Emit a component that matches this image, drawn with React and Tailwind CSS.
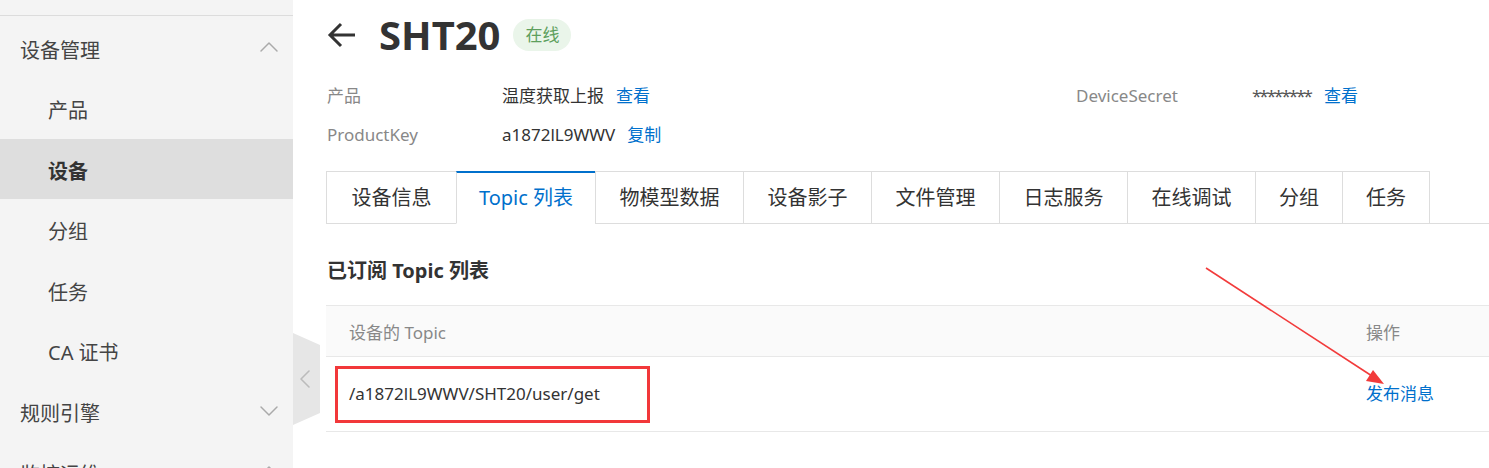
import { ChevronUp, ChevronDown, ChevronLeft } from "lucide-react";

const font = "font-['Noto_Sans','Noto_Sans_CJK_SC',sans-serif]";

const subItems = ["产品", "设备", "分组", "任务", "CA 证书"];

const tabs = [
  { label: "设备信息", w: "w-[130px]" },
  { label: "Topic 列表", w: "w-[139px]", active: true },
  { label: "物模型数据", w: "w-[148px]" },
  { label: "设备影子", w: "w-[128px]" },
  { label: "文件管理", w: "w-[128px]" },
  { label: "日志服务", w: "w-[128px]" },
  { label: "在线调试", w: "w-[128px]" },
  { label: "分组", w: "w-[87px]" },
  { label: "任务", w: "w-[88px]" },
];

function GroupRow({ label, open, h = "h-[60.5px]" }) {
  const Icon = open ? ChevronUp : ChevronDown;
  return (
    <div className={`flex ${h} items-center justify-between pt-[7px] pl-5 pr-2 text-[20px] text-[#444]`}>
      <span>{label}</span>
      <Icon className="-mt-[7px] h-8 w-8 text-[#aaa]" strokeWidth={1.1} />
    </div>
  );
}

function Sidebar() {
  return (
    <aside className="w-[293px] shrink-0 h-[468px] overflow-hidden bg-[#f4f4f4]">
      <div className="h-4 border-b border-[#dcdcdc]" />
      <GroupRow label="设备管理" open h="h-[62px]" />
      {subItems.map((item) => (
        <div
          key={item}
          className={
            "flex h-[60.5px] items-center pt-[6px] pl-12 text-[20px] " +
            (item === "设备" ? "bg-[#dedede] font-bold text-[#333]" : "text-[#444]")
          }
        >
          {item}
        </div>
      ))}
      <GroupRow label="规则引擎" />
      <GroupRow label="监控运维" open />
    </aside>
  );
}

export default function App() {
  return (
    <div className={`relative flex h-[468px] w-[1489px] overflow-hidden bg-white ${font}`}>
      <Sidebar />

      {/* collapse handle */}
      <div className="absolute left-[293px] top-[333px] flex h-[92px] w-[27px] items-center justify-center bg-[#e6e6e6] [clip-path:polygon(0_0,100%_13%,100%_87%,0_100%)]">
        <ChevronLeft className="-ml-[3px] h-8 w-8 shrink-0 text-[#bbb]" strokeWidth={1.2} />
      </div>

      <main className="relative flex-1 pl-[34px]">
        <div className="flex h-[70px] items-center">
          <svg className="h-[26px] w-[30px] text-[#333]" viewBox="0 0 30 26" fill="none" stroke="currentColor" strokeWidth="3">
            <path d="M28 13H3M14 2L3 13l11 11" />
          </svg>
          <h1 className="ml-[22px] text-[40px] font-bold leading-none text-[#333]">SHT20</h1>
          <span className="ml-[13px] rounded-full bg-[#eaf5ea] px-[12px] py-[3px] text-[17px] text-[#5d9f5d]">在线</span>
        </div>

        <div className="mt-[6px] mb-[17px] grid grid-cols-[175px_574px_176px_auto] text-[17px]">
          <div className="flex h-[39px] items-center text-[#888]">产品</div>
          <div className="flex h-[39px] items-center text-[#333]">
            温度获取上报<a className="ml-3 text-[#0070cc]">查看</a>
          </div>
          <div className="flex h-[39px] items-center text-[#888]">DeviceSecret</div>
          <div className="flex h-[39px] items-center text-[#555]">
            <span className="tracking-[-2px]">********</span>
            <a className="ml-[13px] text-[#0070cc]">查看</a>
          </div>
          <div className="flex h-[39px] items-center text-[#888]">ProductKey</div>
          <div className="flex h-[39px] items-center text-[#333]">
            a1872lL9WWV<a className="ml-3 text-[#0070cc]">复制</a>
          </div>
        </div>

        <div className="-ml-px flex border-b border-[#ddd]">
          {tabs.map((t, i) => (
            <div
              key={t.label}
              className={
                `${t.w} -mb-px flex h-[53px] items-center justify-center border-l text-[20px] ` +
                (i === tabs.length - 1 ? "border-r " : "") +
                (t.active
                  ? "border-t-2 border-t-[#0070cc] border-l-[#ddd] border-b border-b-white bg-white text-[#0070cc]"
                  : "border-t border-[#ddd] text-[#333]")
              }
            >
              {t.label}
            </div>
          ))}
        </div>

        <h2 className="pt-[35px] pb-[22px] text-[20px] font-bold leading-6 text-[#333]">已订阅 Topic 列表</h2>

        <div className="-ml-px text-[17px]">
          <div className="flex h-[52px] items-center border-y border-[#e8e8e8] bg-[#fafafa] pt-1 text-[#888]">
            <div className="flex-1 pl-[23px]">设备的 Topic</div>
            <div className="w-[123px]">操作</div>
          </div>
          <div className="flex h-[75px] items-center border-b border-[#e8e8e8]">
            <div className="flex-1 pl-[9px]">
              <div className="flex h-[57px] w-[315px] items-center border-[3px] border-[#f2383a] pl-[11px] text-[#333]">
                /a1872lL9WWV/SHT20/user/get
              </div>
            </div>
            <a className="w-[123px] text-[#0070cc]">发布消息</a>
          </div>
        </div>

        {/* annotation arrow */}
        <svg className="pointer-events-none absolute left-0 top-0 h-[468px] w-[1196px]" viewBox="293 0 1196 468">
          <line x1="1206" y1="268" x2="1372" y2="376" stroke="#f23b3b" strokeWidth="1.6" />
          <polygon points="1384,384 1366,381 1373,370" fill="#f23b3b" />
        </svg>
      </main>
    </div>
  );
}
